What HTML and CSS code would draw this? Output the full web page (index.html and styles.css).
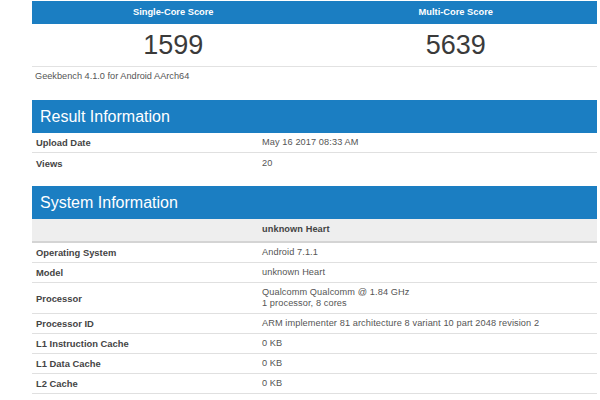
FILE: index.html
```html
<!DOCTYPE html>
<html lang="en">

<head>
  <meta charset="UTF-8" />
  <title>Geekbench Browser</title>
  <link rel="stylesheet" href="styles.css">
</head>

<body>

  <div class="page">

    <div class="scores">
      <div class="score-col">
        <div class="score-head">Single-Core Score</div>
        <div class="score-num">1599</div>
      </div>
      <div class="score-col">
        <div class="score-head">Multi-Core Score</div>
        <div class="score-num">5639</div>
      </div>
    </div>
    <p class="version">Geekbench 4.1.0 for Android AArch64</p>

    <div class="section">
      <h2 class="section-title">Result Information</h2>
      <div class="row">
        <div class="label">Upload Date</div>
        <div class="value">May 16 2017 08:33 AM</div>
      </div>
      <div class="row">
        <div class="label">Views</div>
        <div class="value">20</div>
      </div>
    </div>

    <div class="section">
      <h2 class="section-title">System Information</h2>
      <div class="row row-sub">
        <div class="label"></div>
        <div class="value">unknown Heart</div>
      </div>
      <div class="row">
        <div class="label">Operating System</div>
        <div class="value">Android 7.1.1</div>
      </div>
      <div class="row">
        <div class="label">Model</div>
        <div class="value">unknown Heart</div>
      </div>
      <div class="row">
        <div class="label">Processor</div>
        <div class="value">Qualcomm Qualcomm @ 1.84 GHz<br>1 processor, 8 cores</div>
      </div>
      <div class="row">
        <div class="label">Processor ID</div>
        <div class="value">ARM implementer 81 architecture 8 variant 10 part 2048 revision 2</div>
      </div>
      <div class="row">
        <div class="label">L1 Instruction Cache</div>
        <div class="value">0 KB</div>
      </div>
      <div class="row">
        <div class="label">L1 Data Cache</div>
        <div class="value">0 KB</div>
      </div>
      <div class="row">
        <div class="label">L2 Cache</div>
        <div class="value">0 KB</div>
      </div>
      <div class="row">
        <div class="label">L3 Cache</div>
        <div class="value">0 KB</div>
      </div>
    </div>

  </div>

</body>

</html>
```

FILE: styles.css
```css
* {
  margin: 0;
  padding: 0;
  box-sizing: border-box;
}

body {
  font-family: 'Liberation Sans', Arial, sans-serif;
  background: #fff;
  color: #444;
  overflow: hidden;
}

.page {
  width: 565px;
  margin: 1px 0 0 32px;
}

/* Scores */
.scores {
  display: grid;
  grid-template-columns: 1fr 1fr;
  border-bottom: 1px solid #e2e2e2;
}

.score-head {
  background: #1b7ec2;
  color: #fff;
  font-size: 9.3px;
  font-weight: 700;
  text-align: center;
  height: 23px;
  line-height: 23px;
}

.score-num {
  font-size: 27px;
  color: #3a3a3a;
  text-align: center;
  height: 42px;
  line-height: 42px;
}

.version {
  font-size: 9.2px;
  color: #555;
  padding: 4px 3px 0;
  height: 33px;
}

/* Sections */
.section {
  margin-bottom: 13px;
}

.section-title {
  background: #1b7ec2;
  color: #fff;
  font-size: 16px;
  font-weight: 400;
  height: 33px;
  line-height: 33px;
  padding-left: 8px;
}

.row {
  display: grid;
  grid-template-columns: 226px 1fr;
  align-items: center;
  border-bottom: 1px solid #e0e0e0;
  font-size: 9.2px;
  line-height: 11px;
  padding: 4px 0;
  min-height: 20px;
}

.row:last-child {
  border-bottom: none;
}

.label {
  font-weight: 700;
  color: #444;
  padding-left: 4px;
  font-size: 9.4px;
}

.value {
  color: #555;
  padding-left: 4px;
  letter-spacing: 0.1px;
}

.row-sub {
  background: #eeeeee;
  border-bottom: 2px solid #d4d4d4;
  padding: 5px 0 6px;
  min-height: 23px;
}

.row-sub .value {
  font-weight: 700;
  color: #444;
}
```
